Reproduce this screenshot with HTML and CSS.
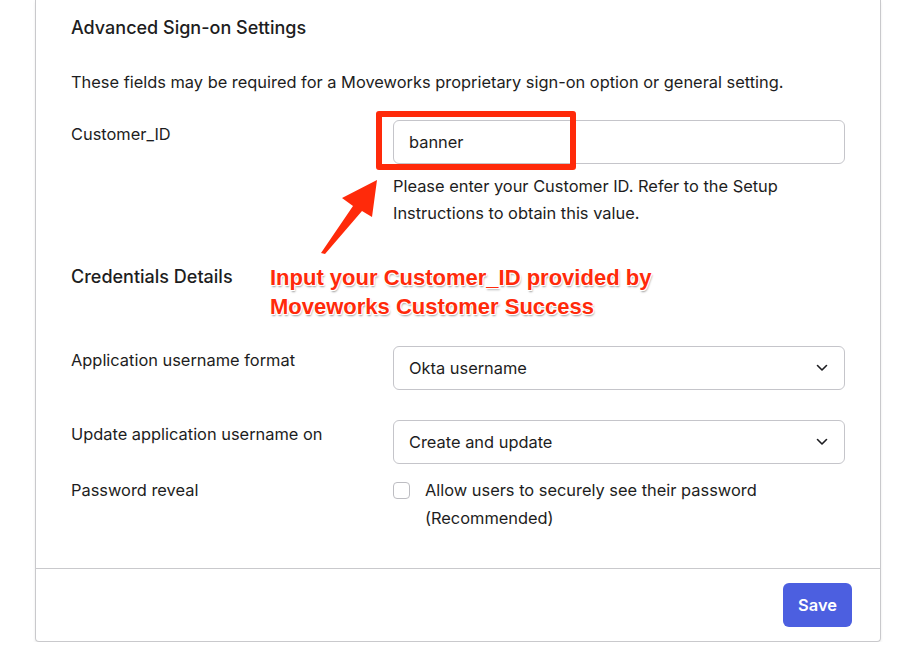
FILE: index.html
```html
<!DOCTYPE html>
<html lang="en">
<head>
    <meta charset="UTF-8">
    <meta name="viewport" content="width=device-width, initial-scale=1.0">
    <title>Advanced Sign-on Settings</title>
    <link rel="stylesheet" href="styles.css">
</head>
<body>
    <div class="card">
        <div class="card-body">
            <h2 class="section-title">Advanced Sign-on Settings</h2>
            <p class="section-intro">These fields may be required for a Moveworks proprietary sign-on option or general setting.</p>

            <div class="field">
                <label class="field-label">Customer_ID</label>
                <div class="field-control">
                    <div class="text-input">banner</div>
                    <p class="help">Please enter your Customer ID. Refer to the Setup Instructions to obtain this value.</p>
                </div>
            </div>

            <h2 class="section-title creds">Credentials Details</h2>

            <div class="field">
                <label class="field-label">Application username format</label>
                <div class="field-control">
                    <div class="select">
                        <span>Okta username</span>
                        <svg width="12" height="8" viewBox="0 0 12 8"><path d="M1.5 1.5 L6 6 L10.5 1.5" fill="none" stroke="#1d1d21" stroke-width="1.6" stroke-linecap="round" stroke-linejoin="round"/></svg>
                    </div>
                </div>
            </div>

            <div class="field">
                <label class="field-label">Update application username on</label>
                <div class="field-control">
                    <div class="select">
                        <span>Create and update</span>
                        <svg width="12" height="8" viewBox="0 0 12 8"><path d="M1.5 1.5 L6 6 L10.5 1.5" fill="none" stroke="#1d1d21" stroke-width="1.6" stroke-linecap="round" stroke-linejoin="round"/></svg>
                    </div>
                </div>
            </div>

            <div class="field check-row">
                <label class="field-label">Password reveal</label>
                <div class="field-control checkbox-line">
                    <span class="checkbox"></span>
                    <span>Allow users to securely see their password (Recommended)</span>
                </div>
            </div>
        </div>
        <div class="card-footer">
            <button class="save">Save</button>
        </div>
    </div>

    <!-- screenshot annotation -->
    <div class="callout-box"></div>
    <svg class="callout-arrow" width="910" height="664" viewBox="0 0 910 664">
        <polygon points="377,180 342,198 353,206 321,253 325,254 362,211 372,217" fill="#ff2a0a"/>
    </svg>
    <div class="callout-text">Input your Customer_ID provided by<br>Moveworks Customer Success</div>
</body>
</html>
```

FILE: styles.css
```css
body {
    margin: 0;
    background: #fff;
    font-family: 'Inter', 'Noto Sans', sans-serif;
    font-size: 16.4px;
    color: #1d1d21;
}

.card {
    width: 844px;
    margin-left: 35px;
    border: 1px solid #c9c9cc;
    border-top: none;
    border-radius: 0 0 4px 4px;
    box-shadow: 0 2px 3px rgba(0, 0, 0, 0.08);
}

.card-body {
    padding: 16px 35px 36px 35px;
}

.section-title {
    margin: 0;
    font-size: 18px;
    font-weight: 500;
    line-height: 24px;
}

.section-intro {
    margin: 30px 0 26px;
    line-height: 24px;
}

.creds {
    margin-top: 38px;
    margin-bottom: 57px;
}

.field {
    display: grid;
    grid-template-columns: 322px 1fr;
    margin-bottom: 30px;
}

.field-label {
    line-height: 24px;
    padding-top: 2px;
}

.text-input,
.select {
    height: 42px;
    border: 1px solid #c5c5ca;
    border-radius: 6px;
    padding: 0 15px;
    display: flex;
    align-items: center;
    justify-content: space-between;
}

.select svg {
    margin-right: 1px;
}

.help {
    margin: 9px 0 0;
    line-height: 27px;
}

.field:nth-of-type(3) {
    margin-bottom: 12px;
}

.check-row {
    margin-bottom: 0;
}

.check-row .field-label {
    line-height: 28px;
    padding-top: 0;
}

.checkbox-line {
    display: flex;
    gap: 15px;
    line-height: 28px;
}

.checkbox {
    flex: none;
    width: 15px;
    height: 15px;
    margin-top: 6px;
    border: 1.5px solid #bdbdc2;
    border-radius: 4px;
}

.card-footer {
    border-top: 1px solid #c9c9cc;
    padding: 14px 28px 14px;
    display: flex;
    justify-content: flex-end;
}

.save {
    width: 69px;
    height: 44px;
    border: none;
    border-radius: 6px;
    background: #4c5fe0;
    color: #fff;
    font-family: 'Inter', sans-serif;
    font-size: 16.4px;
    font-weight: 600;
}

/* annotation overlay */
.callout-box {
    position: absolute;
    left: 376px;
    top: 111px;
    width: 188px;
    height: 47px;
    border: 6px solid #ff2a0a;
    border-radius: 3px;
}

.callout-arrow {
    position: absolute;
    left: 0;
    top: 0;
}

.callout-text {
    position: absolute;
    left: 270px;
    top: 263px;
    font-family: 'Liberation Sans', Arial, sans-serif;
    font-weight: bold;
    font-size: 22px;
    line-height: 29px;
    color: #ff2a0a;
    text-shadow: 1px 1px 0 #fff, -1px -1px 0 #fff, 1px -1px 0 #fff, -1px 1px 0 #fff, 1px 2px 2px rgba(0, 0, 0, 0.4);
}
```
